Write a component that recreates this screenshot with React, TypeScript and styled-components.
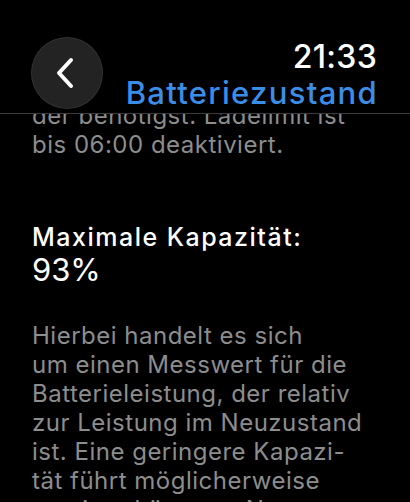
import styled, { createGlobalStyle } from "styled-components";

/**
 * Styles
 */
const GlobalStyle = createGlobalStyle`
  html, body {
    margin: 0;
    padding: 0;
    background: #000;
  }
  body {
    font-family: "Inter", "Roboto", sans-serif;
    -webkit-font-smoothing: antialiased;
  }
`;

const Screen = styled.div`
  width: 410px;
  height: 502px;
  background: #000;
  overflow: hidden;
  display: flex;
  flex-direction: column;
`;

const Header = styled.header`
  flex: 0 0 auto;
  height: 113px;
  border-bottom: 1px solid #3a3a3c;
  display: flex;
  align-items: flex-start;
  justify-content: space-between;
  padding: 0 33px 0 31px;
`;

const BackButton = styled.button`
  margin-top: 37px;
  width: 72px;
  height: 72px;
  border-radius: 50%;
  border: none;
  background: #232323;
  box-shadow: inset 0 0 0 1px rgba(255, 255, 255, 0.07);
  display: flex;
  align-items: center;
  justify-content: center;
  padding: 0 4px 0 0;
`;

const TitleBlock = styled.div`
  display: flex;
  flex-direction: column;
  align-items: flex-end;
  padding-top: 39px;
`;

const Clock = styled.div`
  color: #fff;
  font-size: 32px;
  font-weight: 500;
  line-height: 36px;
  letter-spacing: 0.3px;
`;

const Title = styled.div`
  color: #3b8ee8;
  font-size: 31px;
  font-weight: 500;
  line-height: 36px;
  letter-spacing: 1.3px;
  margin-right: -1px;
`;

const Content = styled.main`
  flex: 1 1 auto;
  overflow: hidden;
  padding: 0 32px;
`;

const Paragraph = styled.p<{ $scrolled?: number }>`
  margin: ${(p) => (p.$scrolled ? `-${p.$scrolled}px` : "0")} 0 0;
  color: #8d8d8d;
  font-size: 24px;
  line-height: 29px;
  letter-spacing: 0.5px;
  white-space: nowrap;
`;

const Label = styled.div`
  margin-top: 63px;
  color: #fff;
  font-size: 25px;
  font-weight: 500;
  line-height: 30px;
  letter-spacing: 1.5px;
`;

const Value = styled.div`
  color: #fff;
  font-size: 31px;
  line-height: 36px;
  margin-bottom: 33px;
`;

const Chevron = () => (
  <svg width="22" height="32" viewBox="0 0 22 32" fill="none">
    <path d="M17 3 L5 16 L17 29" stroke="#fff" strokeWidth="4" strokeLinecap="round" strokeLinejoin="round" />
  </svg>
);

const App = () => {
  return (
    <Screen>
      <GlobalStyle />
      <Header>
        <BackButton aria-label="Zurück">
          <Chevron />
        </BackButton>
        <TitleBlock>
          <Clock>21:33</Clock>
          <Title>Batteriezustand</Title>
        </TitleBlock>
      </Header>
      <Content>
        <Paragraph $scrolled={13}>
          der benötigst. Ladelimit ist
          <br />
          bis 06:00 deaktiviert.
        </Paragraph>
        <Label>Maximale Kapazität:</Label>
        <Value>93%</Value>
        <Paragraph>
          Hierbei handelt es sich
          <br />
          um einen Messwert für die
          <br />
          Batterieleistung, der relativ
          <br />
          zur Leistung im Neuzustand
          <br />
          ist. Eine geringere Kapazi-
          <br />
          tät führt möglicherweise
          <br />
          zu einer kürzeren Nutzungs-
        </Paragraph>
      </Content>
    </Screen>
  );
};

export default App;
